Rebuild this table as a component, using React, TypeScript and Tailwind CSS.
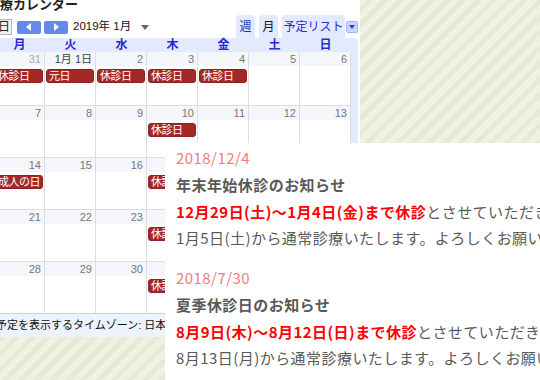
import { FC } from 'react';

type Day = { d: string; ev?: string; muted?: boolean; dark?: boolean };

const weekdays = ['月', '火', '水', '木', '金', '土', '日'];

const weeks: Day[][] = [
  [
    { d: '31', ev: '休診日', muted: true },
    { d: '1月 1日', ev: '元日', dark: true },
    { d: '2', ev: '休診日' },
    { d: '3', ev: '休診日' },
    { d: '4', ev: '休診日' },
    { d: '5' },
    { d: '6' },
  ],
  [{ d: '7' }, { d: '8' }, { d: '9' }, { d: '10', ev: '休診日' }, { d: '11' }, { d: '12' }, { d: '13' }],
  [{ d: '14', ev: '成人の日' }, { d: '15' }, { d: '16' }, { d: '17', ev: '休診日' }, { d: '18' }, { d: '19' }, { d: '20' }],
  [{ d: '21' }, { d: '22' }, { d: '23' }, { d: '24', ev: '休診日' }, { d: '25' }, { d: '26' }, { d: '27' }],
  [{ d: '28' }, { d: '29' }, { d: '30' }, { d: '31', ev: '休診日' }, { d: '1', muted: true }, { d: '2', muted: true }, { d: '3', muted: true }],
];

const DayCell: FC<{ day: Day; first: boolean }> = ({ day, first }) => (
  <div className={first ? 'h-[53px] border-r border-[#dddddd] bg-white' : 'h-[51px] border-r border-[#dddddd] bg-white'}>
    <div
      className={
        day.muted
          ? 'h-[14px] bg-[#f4f6fb] pr-[3px] text-right text-[11px] leading-[14px] text-[#aaaaaa]'
          : day.dark
            ? 'h-[14px] bg-[#f4f6fb] pr-[3px] text-right text-[11px] leading-[14px] text-[#444444]'
            : 'h-[14px] bg-[#f4f6fb] pr-[3px] text-right text-[11px] leading-[14px] text-[#777777]'
      }
    >
      {day.d}
    </div>
    {day.ev && (
      <div className="mx-px mt-[3px] h-[14px] overflow-hidden whitespace-nowrap rounded-[3px] border border-[#8c1f1f] bg-[#a32929] pl-[2px] text-[11px] leading-[12px] tracking-[-0.5px] text-white">
        {day.ev}
      </div>
    )}
  </div>
);

const Calendar = () => (
  <div className="ml-[-6px] w-[366px] bg-white font-['Liberation_Sans','Noto_Sans_CJK_JP',sans-serif]">
    <div className="ml-[-7px] mt-[-3px] h-[16px] whitespace-nowrap text-[13px] font-bold leading-[16px] text-[#222222]">
      診療カレンダー
    </div>

    <div className="flex h-[25px] items-end justify-between">
      <div className="flex h-full items-center pt-[3px]">
        <div className="ml-[-10px] flex h-[16px] w-[28px] items-center justify-center whitespace-nowrap border border-[#b5b5b5] bg-[#f1f1f1] text-[12px] text-[#222222]">
          今日
        </div>
        <div className="ml-[5px] flex h-[13px] w-[24px] items-center justify-center rounded-[2px] bg-[#6687ee]">
          <svg width="6" height="8" viewBox="0 0 6 8">
            <path d="M5 0 L0 4 L5 8 Z" fill="#fff" />
          </svg>
        </div>
        <div className="ml-[3px] flex h-[13px] w-[24px] items-center justify-center rounded-[2px] bg-[#6687ee]">
          <svg width="6" height="8" viewBox="0 0 6 8">
            <path d="M1 0 L6 4 L1 8 Z" fill="#fff" />
          </svg>
        </div>
        <div className="ml-[5px] whitespace-nowrap text-[11.5px] text-[#111111]">2019年 1月</div>
        <svg className="ml-[10px]" width="8" height="5" viewBox="0 0 8 5">
          <path d="M0 0 L8 0 L4 5 Z" fill="#666" />
        </svg>
      </div>

      <div className="mr-[2px] flex items-end gap-[4px]">
        <div className="flex h-[23px] w-[19px] items-center justify-center rounded-t-[4px] bg-[#e3e9ff] text-[12px] text-[#2b2bb0]">週</div>
        <div className="flex h-[23px] w-[19px] items-center justify-center rounded-t-[4px] bg-[#e3e9ff] text-[12px] text-[#111111]">月</div>
        <div className="flex items-center">
          <div className="flex h-[23px] w-[63px] items-center justify-center whitespace-nowrap rounded-t-[4px] bg-[#e3e9ff] text-[12px] text-[#2b2bc8]">
            予定リスト
          </div>
          <div className="ml-px flex h-[12px] w-[12px] items-center justify-center rounded-[2px] border border-[#9fb3ea] bg-[#c9d6fa]">
            <svg width="6" height="4" viewBox="0 0 6 4">
              <path d="M0 0 L6 0 L3 4 Z" fill="#2244bb" />
            </svg>
          </div>
        </div>
      </div>
    </div>

    <div className="flex w-[364px] flex-col rounded-tr-[5px] bg-[#e3e9ff]">
      <div className="grid w-[357px] grid-cols-7">
        {weekdays.map((w) => (
          <div key={w} className="h-[14px] text-center text-[12px] font-bold leading-[14px] text-[#2a2ad0]">
            {w}
          </div>
        ))}
      </div>
      <div className="flex w-[357px] flex-col">
        {weeks.map((week, i) => (
          <div key={i} className={i === 0 ? 'grid grid-cols-7' : 'grid grid-cols-7 border-t border-[#dddddd]'}>
            {week.map((day, j) => (
              <DayCell key={j} day={day} first={i === 0} />
            ))}
          </div>
        ))}
      </div>
      <div className="flex h-[24px] shrink-0 items-center whitespace-nowrap border-t border-[#c2d1f6] bg-[#eef2fd] pl-[2px] text-[11px] text-[#111111]">
        予定を表示するタイムゾーン: 日本標準時
      </div>
    </div>
  </div>
);

const Notices = () => (
  <div className="absolute left-[165px] top-[143px] h-[237px] w-[375px] overflow-hidden whitespace-nowrap bg-white pl-[11px] pt-[2px] font-['Noto_Sans_CJK_JP',sans-serif] text-[15px] tracking-[0.03em] text-[#595959]">
    <div className="h-[26px] leading-[26px] text-[#f47c7c]">2018/12/4</div>
    <div className="h-[27px] font-bold leading-[27px]">年末年始休診のお知らせ</div>
    <div className="h-[27px] leading-[27px]">
      <span className="font-bold text-[#ff0000]">12月29日(土)〜1月4日(金)まで休診</span>とさせていただきます。
    </div>
    <div className="h-[26px] leading-[26px]">1月5日(土)から通常診療いたします。よろしくお願いいたします。</div>

    <div className="mt-[14px] h-[26px] leading-[26px] text-[#f47c7c]">2018/7/30</div>
    <div className="h-[27px] font-bold leading-[27px]">夏季休診日のお知らせ</div>
    <div className="h-[27px] leading-[27px]">
      <span className="font-bold text-[#ff0000]">8月9日(木)〜8月12日(日)まで休診</span>とさせていただきます。
    </div>
    <div className="h-[26px] leading-[26px]">8月13日(月)から通常診療いたします。よろしくお願いいたします。</div>
  </div>
);

export default function App() {
  return (
    <div className="relative h-[380px] w-[540px] overflow-hidden bg-[image:repeating-linear-gradient(135deg,#eff1e3_0px,#eff1e3_6px,#e6e9d4_6px,#e6e9d4_11px)]">
      <Calendar />
      <Notices />
    </div>
  );
}
